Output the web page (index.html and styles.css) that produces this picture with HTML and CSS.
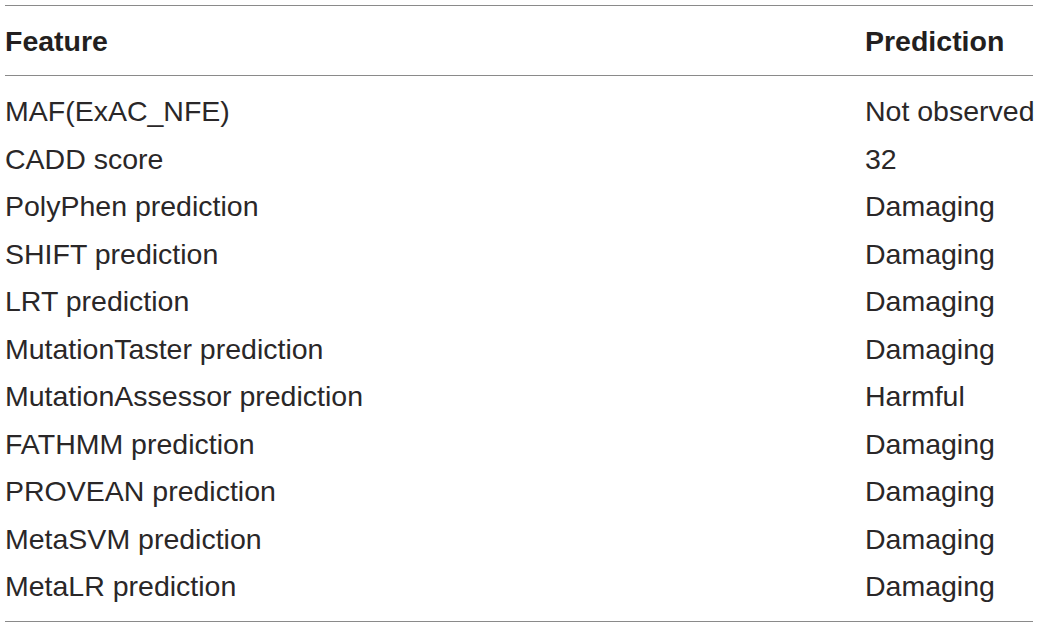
FILE: index.html
```html
<!DOCTYPE html>
<html>
<head>
<meta charset="utf-8">
<link rel="stylesheet" href="styles.css">
</head>
<body>
<table class="data">
  <thead>
    <tr><th class="c1">Feature</th><th class="c2">Prediction</th></tr>
  </thead>
  <tbody>
    <tr><td class="c1">MAF(ExAC_NFE)</td><td class="c2">Not observed</td></tr>
    <tr><td class="c1">CADD score</td><td class="c2">32</td></tr>
    <tr><td class="c1">PolyPhen prediction</td><td class="c2">Damaging</td></tr>
    <tr><td class="c1">SHIFT prediction</td><td class="c2">Damaging</td></tr>
    <tr><td class="c1">LRT prediction</td><td class="c2">Damaging</td></tr>
    <tr><td class="c1">MutationTaster prediction</td><td class="c2">Damaging</td></tr>
    <tr><td class="c1">MutationAssessor prediction</td><td class="c2">Harmful</td></tr>
    <tr><td class="c1">FATHMM prediction</td><td class="c2">Damaging</td></tr>
    <tr><td class="c1">PROVEAN prediction</td><td class="c2">Damaging</td></tr>
    <tr><td class="c1">MetaSVM prediction</td><td class="c2">Damaging</td></tr>
    <tr><td class="c1">MetaLR prediction</td><td class="c2">Damaging</td></tr>
  </tbody>
</table>
</body>
</html>
```
FILE: styles.css
```css
html, body {
  margin: 0;
  padding: 0;
  background: #ffffff;
}
body {
  font-family: "Liberation Sans", Arial, sans-serif;
  color: #2a2728;
}
.data {
  margin: 5px 0 0 5px;
  width: 1028px;
  table-layout: fixed;
  border-collapse: collapse;
  border-top: 1px solid #8a8a8a;
  border-bottom: 1px solid #8a8a8a;
  font-size: 28.5px;
}
.data th, .data td {
  padding: 0;
  text-align: left;
  vertical-align: top;
  white-space: nowrap;
}
.data .c1 { width: 860px; }
.data th {
  font-weight: bold;
  font-size: 28.5px;
  line-height: 47px;
  padding-top: 12px;
  padding-bottom: 10px;
  border-bottom: 1px solid #8a8a8a;
  color: #231f20;
}
.data td {
  line-height: 47.5px;
}
.data tbody tr:first-child td { padding-top: 12px; }
.data tbody tr:last-child td { padding-bottom: 10px; }
```
